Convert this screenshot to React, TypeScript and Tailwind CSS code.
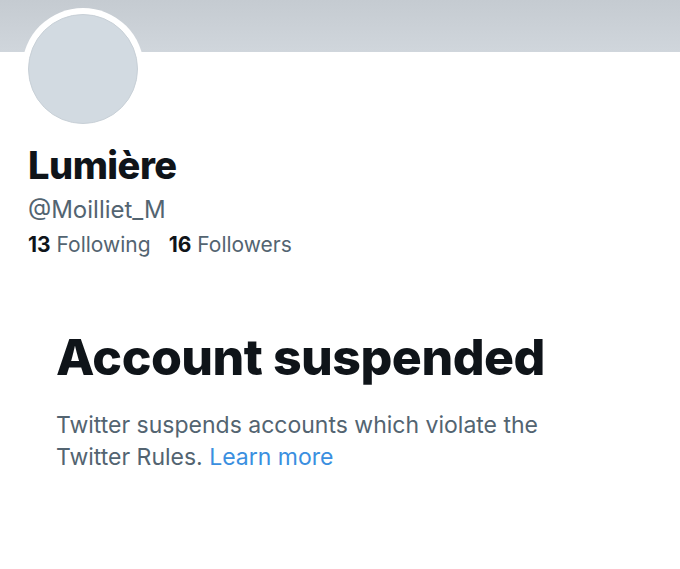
import React from "react";

const App = () => {
    return (
        <div className="w-[680px] h-[569px] bg-white overflow-hidden font-['Inter',sans-serif]">
            {/* Banner */}
            <div className="h-[52px] bg-gradient-to-b from-[#c5cbd1] to-[#d0d6dc]"></div>

            {/* Avatar */}
            <div className="ml-[22px] -mt-[44px] w-[122px] h-[122px] rounded-full bg-white p-[6px]">
                <div className="w-full h-full rounded-full bg-[#d2dae1] border border-[#c8d0d7]"></div>
            </div>

            {/* Profile info */}
            <div className="px-[28px] mt-[13px]">
                <h2 className="text-[#0f1419] text-[38px] leading-[44px] font-extrabold tracking-[-0.5px]">
                    Lumière
                </h2>
                <p className="text-[#536471] text-[24px] leading-[30px] mt-[8px]">
                    @Moilliet_M
                </p>
                <div className="flex gap-[18px] text-[21px] leading-[28px] mt-[6px]">
                    <span>
                        <span className="text-[#0f1419] font-bold">13</span>
                        <span className="text-[#536471]"> Following</span>
                    </span>
                    <span>
                        <span className="text-[#0f1419] font-bold">16</span>
                        <span className="text-[#536471]"> Followers</span>
                    </span>
                </div>
            </div>

            {/* Suspended message */}
            <div className="px-[56px] mt-[70px]">
                <h1 className="text-[#0f1419] text-[50px] leading-[56px] font-extrabold tracking-[-0.5px]">
                    Account suspended
                </h1>
                <p className="text-[#536471] text-[23px] leading-[32px] mt-[24px] w-[540px]">
                    Twitter suspends accounts which violate the Twitter Rules.{" "}
                    <span className="text-[#3a8fe0]">Learn more</span>
                </p>
            </div>
        </div>
    );
};

export default App;
